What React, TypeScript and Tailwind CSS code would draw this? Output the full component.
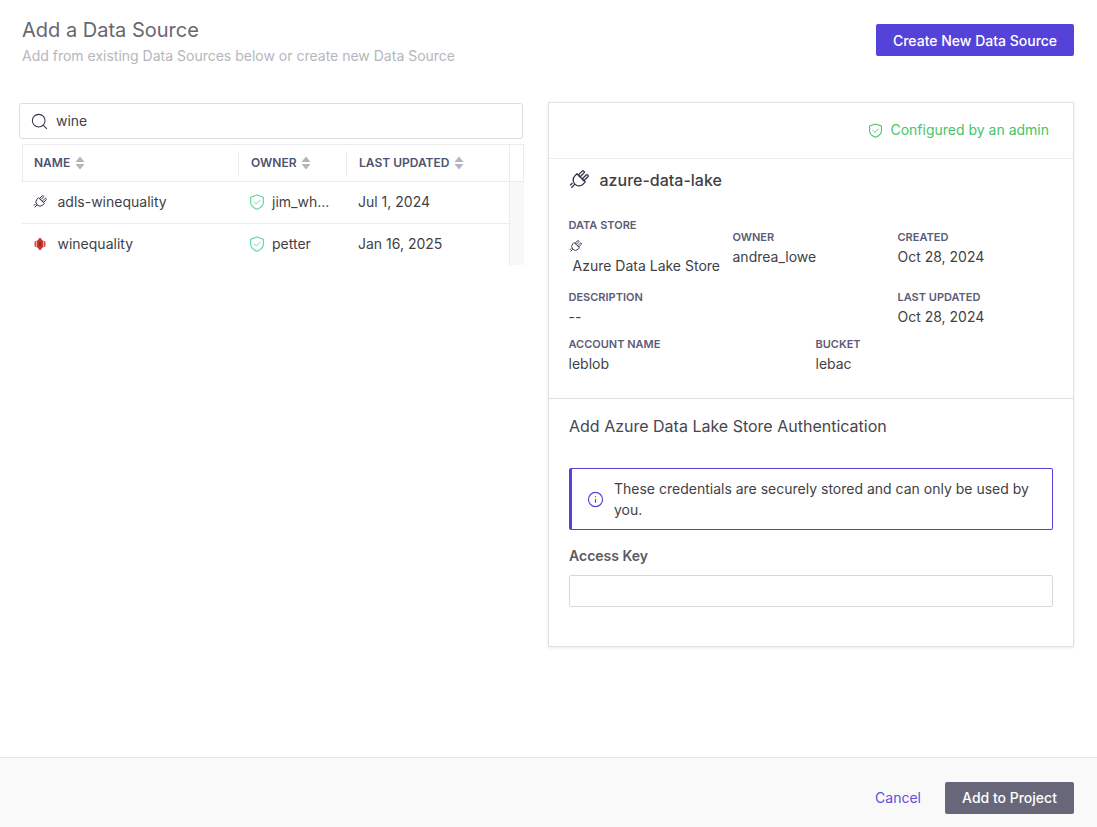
import { Search, Info } from "lucide-react"

function SortIcon() {
  return (
    <svg width="10" height="14" viewBox="0 0 10 14" className="ml-[5px] shrink-0">
      <path d="M5 0.5 L9.5 6 H0.5 Z" fill="#b5b5bd" />
      <path d="M5 13.5 L9.5 8 H0.5 Z" fill="#b5b5bd" />
    </svg>
  )
}

function PlugIcon({ size }: { size: number }) {
  return (
    <svg width={size} height={size} viewBox="0 0 24 24" fill="none" stroke="#33344a" strokeWidth="1.6" strokeLinejoin="round" className="shrink-0">
      <g transform="rotate(45 12 12)">
        <rect x="7.2" y="0.5" width="3" height="8" rx="1.2" />
        <rect x="13.8" y="0.5" width="3" height="8" rx="1.2" />
        <path d="M5 8.5 H19 V12 a7 7 0 0 1 -14 0 Z" />
        <path d="M12 19 V25 M9 20 V24" />
      </g>
    </svg>
  )
}

function ShieldIcon({ size, color }: { size: number; color: string }) {
  return (
    <svg width={size} height={size} viewBox="0 0 24 24" fill="none" stroke={color} strokeLinejoin="round" strokeLinecap="round" className="shrink-0">
      <path d="M12 1.5 L21.5 4.8 V12.5 C21.5 17.5 17 21 12 22.8 C7 21 2.5 17.5 2.5 12.5 V4.8 Z" strokeWidth="1.7" />
      <path d="M8 12 L11 15 L16.5 9.5" strokeWidth="1.3" />
    </svg>
  )
}

// icono rojo del bucket
function RedIcon() {
  return (
    <svg width="12" height="12" viewBox="0 0 12 12" className="shrink-0">
      <path d="M0.5 3.5 L2.5 2.5 V9.5 L0.5 8.5 Z" fill="#d9534f" />
      <path d="M9.5 2.5 L11.5 3.5 V8.5 L9.5 9.5 Z" fill="#d9534f" />
      <path d="M3 2.5 L4.5 2 V0.5 L6 0 L7.5 0.5 V2 L9 2.5 V9.5 L7.5 10 V11.5 L6 12 L4.5 11.5 V10 L3 9.5 Z" fill="#c9352c" />
      <path d="M5 4 H7 V8 H5 Z" fill="#8e2a20" />
    </svg>
  )
}

function Field({ label, children, className }: { label: string; children: React.ReactNode; className?: string }) {
  return (
    <div className={className}>
      <div className="text-[11px] leading-4 font-semibold text-[#5c5c78] uppercase">{label}</div>
      <div className="text-sm leading-5 text-[#3f3f46] mt-[2px]">{children}</div>
    </div>
  )
}

const rows = [
  { name: "adls-winequality", owner: "jim_wh...", updated: "Jul 1, 2024", icon: <PlugIcon size={14} /> },
  { name: "winequality", owner: "petter", updated: "Jan 16, 2025", icon: <RedIcon /> },
]

export default function App() {
  return (
    <div className="h-[827px] flex flex-col bg-white overflow-hidden font-['Inter',sans-serif]">
      <div className="flex justify-between pl-[22px] pr-[23px] pt-[17px]">
        <div>
          <h1 className="text-xl leading-[26px] text-[#67676f]">Add a Data Source</h1>
          <p className="text-sm leading-5 mt-[3px] text-[#b6b6bc]">Add from existing Data Sources below or create new Data Source</p>
        </div>
        <button className="mt-[7px] w-[198px] h-8 pt-[2px] bg-[#5543d9] rounded-[2px] text-sm font-medium text-white">
          Create New Data Source
        </button>
      </div>

      <div className="flex-1 flex pl-[19px] pr-[23px] pt-[36px] gap-[24px]">
        {/* lista de la izquierda */}
        <div className="w-[505px] shrink-0 pt-[1px]">
          <div className="w-[504px] h-9 border border-[#dddde0] rounded-[3px] flex items-center pl-[10px]">
            <Search size={19} strokeWidth={1.3} className="text-[#33344a]" />
            <span className="ml-[7px] text-sm text-[#3f3f46]">wine</span>
          </div>
          <div className="ml-[3px] mt-[5px] border-t border-[#ececee]">
            <div className="flex h-[37px] border-b border-[#ececee] border-l items-center">
              <div className="w-[216px] h-[25px] flex items-center pl-[11px] border-r border-[#ececee]">
                <span className="text-xs font-semibold text-[#4d5370]">NAME</span>
                <SortIcon />
              </div>
              <div className="w-[108px] h-[25px] flex items-center pl-[12px] border-r border-[#ececee]">
                <span className="text-xs font-semibold text-[#4d5370]">OWNER</span>
                <SortIcon />
              </div>
              <div className="w-[162px] h-[25px] flex items-center pl-[12px]">
                <span className="text-xs font-semibold text-[#4d5370]">LAST UPDATED</span>
                <SortIcon />
              </div>
              <div className="flex-1 h-[37px] border-l border-r border-[#ececee]" />
            </div>
            <div className="flex">
              <div className="w-[487px] shrink-0">
                {rows.map((r) => (
                  <div key={r.name} className="flex items-center h-[42px] last:h-[41px] pb-[1px] border-b border-[#ececee] last:border-b-0 text-sm text-[#3f3f46]">
                    <div className="w-[216px] flex items-center pl-[12px] gap-[11.5px]">
                      <span className="w-3 flex justify-center">{r.icon}</span>
                      {r.name}
                    </div>
                    <div className="w-[108px] flex items-center pl-[11px] gap-[7px]">
                      <ShieldIcon size={16} color="#5cd69b" />
                      {r.owner}
                    </div>
                    <div className="pl-[12px]">{r.updated}</div>
                  </div>
                ))}
              </div>
              <div className="w-[15px] bg-[#f8f8f8] border-l border-[#ececee]" />
            </div>
          </div>
        </div>

        {/* detalle del data source */}
        <div className="w-[526px] h-[545px] border border-[#e0e0e3] shadow-[0_1px_3px_rgba(0,0,0,0.08)]">
          <div className="h-[56px] pb-[1px] border-b border-[#ececee] flex items-center justify-end pr-[24px] gap-[7px]">
            <ShieldIcon size={15} color="#45c46a" />
            <span className="text-sm text-[#45c46a]">Configured by an admin</span>
          </div>
          <div className="pl-[19.5px] pr-[20px] pt-[9px] h-[240px] border-b border-[#e0e0e3]">
            <div className="flex items-center gap-[11px]">
              <PlugIcon size={20} />
              <span className="text-base font-medium text-[#3f3f46]">azure-data-lake</span>
            </div>
            <div className="grid grid-cols-[164px_165px_1fr] mt-[25px]">
              <div className="row-span-1">
                <div className="text-[11px] leading-4 font-semibold text-[#5c5c78]">DATA STORE</div>
                <div className="h-[18px] mt-[4px] flex items-center"><PlugIcon size={13} /></div>
                <div className="text-sm leading-5 text-[#3f3f46] mt-[1px] pl-[4px] whitespace-nowrap">Azure Data Lake Store</div>
              </div>
              <Field label="OWNER" className="pt-[12px]">andrea_lowe</Field>
              <Field label="CREATED" className="pt-[12px]">Oct 28, 2024</Field>
              <Field label="DESCRIPTION" className="col-span-2 mt-[13px]">--</Field>
              <Field label="LAST UPDATED" className="mt-[13px]">Oct 28, 2024</Field>
            </div>
            <div className="grid grid-cols-[247px_1fr] mt-[9px]">
              <Field label="ACCOUNT NAME">leblob</Field>
              <Field label="BUCKET">lebac</Field>
            </div>
          </div>
          <div className="px-[20px] pt-[17px]">
            <h2 className="text-base leading-5 text-[#46464f]">Add Azure Data Lake Store Authentication</h2>
            <div className="mt-[32px] h-[62px] border border-[#5543d9] border-l-[3px] rounded-[2px] flex items-center pl-[15px] pr-[20px] gap-[10px]">
              <Info size={17} strokeWidth={1.6} className="text-[#5543d9] shrink-0" />
              <p className="text-sm leading-[21px] text-[#3f3f46]">These credentials are securely stored and can only be used by you.</p>
            </div>
            <label className="block mt-[16px] text-sm leading-5 font-semibold text-[#5a5a62]">Access Key</label>
            <div className="mt-[9px] h-8 border border-[#d8d8dc] rounded-[2px]" />
          </div>
        </div>
      </div>

      <div className="h-[70px] bg-[#f9f9f9] border-t border-[#e6e6e8] flex items-center justify-end pr-[23px] pt-[10px]">
        <button className="text-sm text-[#5f4fe0] mr-[24px]">Cancel</button>
        <button className="w-[129px] h-8 bg-[#676779] rounded-[2px] text-sm font-medium text-white">Add to Project</button>
      </div>
    </div>
  )
}
